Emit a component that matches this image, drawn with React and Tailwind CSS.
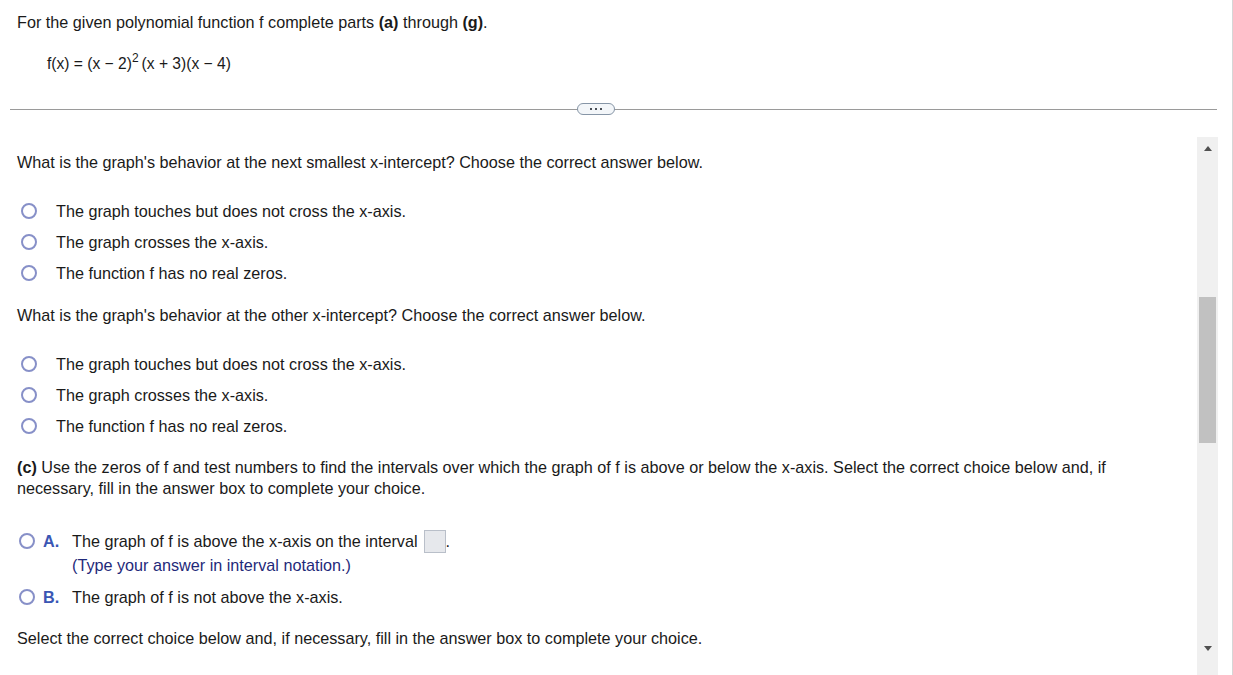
import React from 'react';

const font = { fontFamily: '"Liberation Sans", Arial, sans-serif' };

function Radio({ className = '' }) {
  return (
    <span
      className={`inline-block w-[16px] h-[16px] rounded-full border-2 border-[#8790c8] bg-white shrink-0 ${className}`}
    />
  );
}

function OptionList({ items }) {
  return (
    <div className="flex flex-col gap-[11px]">
      {items.map((t) => (
        <div key={t} className="flex items-center h-[20px]">
          <Radio className="ml-[4px]" />
          <span className="ml-[19px]">{t}</span>
        </div>
      ))}
    </div>
  );
}

const behavior = [
  'The graph touches but does not cross the x-axis.',
  'The graph crosses the x-axis.',
  'The function f has no real zeros.',
];

function Scrollbar() {
  return (
    <div className="w-[21px] mt-[7px] bg-[#f0f0f0] flex flex-col items-center">
      <div className="h-[22px] flex items-center justify-center pt-[1px]">
        <div className="w-0 h-0 border-l-[4px] border-r-[4px] border-b-[5px] border-l-transparent border-r-transparent border-b-[#505050]" />
      </div>
      <div className="h-[138px]" />
      <div className="w-[17px] h-[146px] bg-[#c1c1c1]" />
      <div className="flex-1" />
      <div className="h-[37px] flex items-start justify-center pt-[8px]">
        <div className="w-0 h-0 border-l-[4px] border-r-[4px] border-t-[5px] border-l-transparent border-r-transparent border-t-[#505050]" />
      </div>
    </div>
  );
}

export default function App() {
  return (
    <div
      style={font}
      className="w-[1233px] h-[675px] overflow-hidden bg-white text-[16.2px] text-[#1a1a1a] flex flex-col border-r border-[#d6d6d6]"
    >
      {/* Header */}
      <div className="pl-[17px] pt-[12px] leading-[20px]">
        For the given polynomial function f complete parts <b>(a)</b> through <b>(g)</b>.
      </div>
      <div className="pl-[47px] pt-[22px] h-[42px] leading-[20px] text-[15.6px]">
        f(x) = (x − 2)<span className="inline-block mr-[3px] text-[12px] leading-[10px] relative -top-[7px]">2</span>(x + 3)(x − 4)
      </div>

      {/* Divider */}
      <div className="relative ml-[10px] mr-[15px] mt-[35px] h-[1px] bg-[#9a9a9a]">
        <div className="absolute left-[567px] -top-[6px] w-[38px] h-[12px] rounded-full border border-[#8695a6] bg-[#f3f6f9] flex items-center justify-center gap-[3px]">
          <span className="w-[2px] h-[2px] bg-[#4a4f57]" />
          <span className="w-[2px] h-[2px] bg-[#4a4f57]" />
          <span className="w-[2px] h-[2px] bg-[#4a4f57]" />
        </div>
      </div>

      <div className="flex flex-1 min-h-0 mt-[20px]">
        <div className="flex-1 pl-[17px] pt-[22px] leading-[20px]">
          <div>What is the graph's behavior at the next smallest x-intercept? Choose the correct answer below.</div>
          <div className="mt-[29px]">
            <OptionList items={behavior} />
          </div>
          <div className="mt-[22px]">What is the graph's behavior at the other x-intercept? Choose the correct answer below.</div>
          <div className="mt-[29px]">
            <OptionList items={behavior} />
          </div>
          <p className="mt-[21px] leading-[21px] pr-[60px]">
            <b>(c)</b> Use the zeros of f and test numbers to find the intervals over which the graph of f is above or below the x-axis. Select the correct choice below and, if necessary, fill in the answer box to complete your choice.
          </p>

          <div className="mt-[30px] flex leading-[24px]">
            <Radio className="ml-[2px] mt-[4px]" />
            <span className="ml-[8px] w-[29px] font-bold text-[#3a56b4]">A.</span>
            <div>
              <div className="flex items-center">
                The graph of f is above the x-axis on the interval
                <span className="inline-block ml-[6px] w-[22px] h-[23px] border border-[#b9bfc9] bg-[#e6e8ec]" />
                <span>.</span>
              </div>
              <div className="text-[#1f2a7a]">(Type your answer in interval notation.)</div>
            </div>
          </div>
          <div className="mt-[10px] flex items-center h-[20px]">
            <Radio className="ml-[2px]" />
            <span className="ml-[8px] w-[29px] font-bold text-[#3a56b4]">B.</span>
            <span>The graph of f is not above the x-axis.</span>
          </div>
          <div className="mt-[21px]">Select the correct choice below and, if necessary, fill in the answer box to complete your choice.</div>
        </div>
        <Scrollbar />
        <div className="w-[14px]" />
      </div>
    </div>
  );
}
